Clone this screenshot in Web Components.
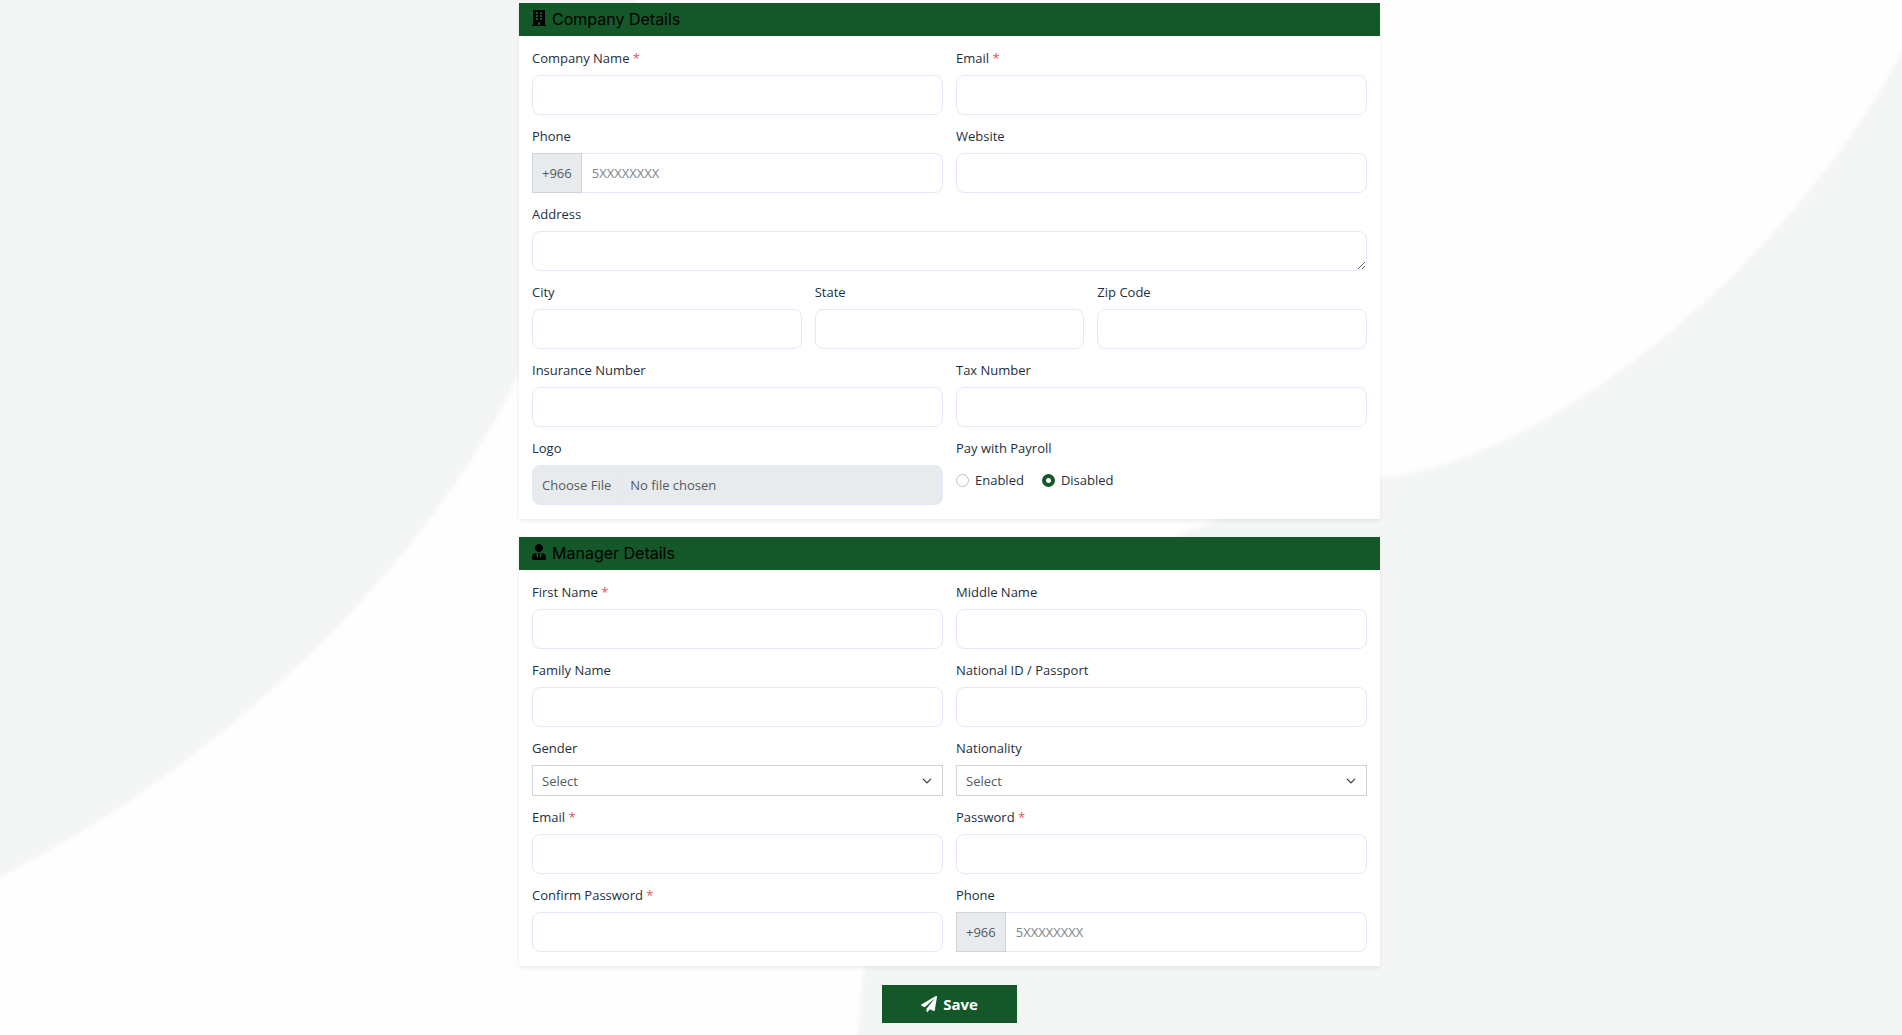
<!DOCTYPE html>
<html lang="en">
<head>
<meta charset="utf-8">
<meta name="viewport" content="width=device-width, initial-scale=1">
<title>Company Registration</title>
<style>
  html, body { margin: 0; min-height: 100%; }
  body { background: #f4f6f6; color: #1e2f40; font: 13px/18px "Open Sans", sans-serif; }
</style>
</head>
<body>
<registration-page>
  <form-card heading="Company Details" icon="building">
    <form-field label="Company Name" required></form-field>
    <form-field label="Email" type="email" required></form-field>
    <form-field label="Phone" type="tel" prefix="+966" placeholder="5XXXXXXXX"></form-field>
    <form-field label="Website" type="url"></form-field>
    <form-field label="Address" type="textarea" span="full"></form-field>
    <form-field label="City" span="third"></form-field>
    <form-field label="State" span="third"></form-field>
    <form-field label="Zip Code" span="third"></form-field>
    <form-field label="Insurance Number"></form-field>
    <form-field label="Tax Number"></form-field>
    <file-field label="Logo"></file-field>
    <radio-field label="Pay with Payroll" options="Enabled,Disabled" value="Disabled"></radio-field>
  </form-card>
  <form-card heading="Manager Details" icon="manager">
    <form-field label="First Name" required></form-field>
    <form-field label="Middle Name"></form-field>
    <form-field label="Family Name"></form-field>
    <form-field label="National ID / Passport"></form-field>
    <form-field label="Gender" type="select"></form-field>
    <form-field label="Nationality" type="select"></form-field>
    <form-field label="Email" type="email" required></form-field>
    <form-field label="Password" type="password" required></form-field>
    <form-field label="Confirm Password" type="password" required></form-field>
    <form-field label="Phone" type="tel" prefix="+966" placeholder="5XXXXXXXX"></form-field>
  </form-card>
  <save-button slot="actions">Save</save-button>
</registration-page>

<script>
const ICONS = {
  building: '<svg viewBox="0 0 14 16" width="14" height="16" aria-hidden="true"><path fill="currentColor" fill-rule="evenodd" d="M1 0h12v15h1v1H0v-1h1zM4 2v2h2V2zM8 2v2h2V2zM4 5v2h2V5zM8 5v2h2V5zM4 8v2h2V8zM8 8v2h2V8zM6 12v3h2v-3z"/></svg>',
  manager: '<svg viewBox="0 0 448 512" width="14" height="16" aria-hidden="true"><path fill="currentColor" d="M224 256c70.7 0 128-57.3 128-128S294.700 0 224 0 96 57.300 96 128s57.300 128 128 128zm95.800 32.600L272 480l-32-136 32-56h-96l32 56-32 136-47.800-191.400C56.900 292 0 350.300 0 422.400V464c0 26.500 21.500 48 48 48h352c26.500 0 48-21.500 48-48v-41.600c0-72.100-56.900-130.400-128.200-133.800z"/></svg>',
  plane: '<svg viewBox="0 0 512 512" width="16" height="16" aria-hidden="true"><path fill="currentColor" d="M476 3.200L12.500 270.600c-18.100 10.400-15.800 35.600 2.200 43.200L121 358.400l287.300-253.200c5.500-4.900 13.300 2.600 8.600 8.300L176 407v80.500c0 23.600 28.500 32.900 42.500 15.800L282 426l124.600 52.200c14.200 6 30.400-2.900 33-18.200l72-432C515 7.800 493.300-6.800 476 3.200z"/></svg>'
};

const BASE = `
  * { box-sizing: border-box; }
  :host { display: block; grid-column: span 3; min-width: 0; }
  label, legend { display: block; padding: 0; line-height: 18px; margin-bottom: 8px; color: #1e2f40; }
  .req { color: #e7515a; }
  input, textarea, select, .prefix { font: inherit; color: #555a60; }
`;

class RegistrationPage extends HTMLElement {
  constructor() {
    super();
    this.attachShadow({ mode: 'open' }).innerHTML = `
      <style>
        :host { display: block; position: relative; min-height: 100vh; overflow: hidden; box-sizing: border-box; padding: 3px 19px 10px 16px; }
        .backdrop { position: absolute; inset: 0; width: 100%; height: 100%; }
        .backdrop path { filter: blur(2px); }
        form { position: relative; display: flex; flex-direction: column; gap: 18px; max-width: 861px; margin: 0 auto; }
        .actions { display: flex; justify-content: center; padding-top: 1px; }
      </style>
      <svg class="backdrop" viewBox="0 0 1902 1035" preserveAspectRatio="none" aria-hidden="true">
        <path fill="#fdfefd" d="M-20 885L0 877C220 767 430 563 518 376C580 240 610 120 640 -20H1940L1902 52C1800 245 1570 455 1380 478C1305 495 1240 505 1172 539C960 640 880 800 864 966L855 1060H-20z"/>
      </svg>
      <form>
        <slot></slot>
        <div class="actions"><slot name="actions"></slot></div>
      </form>`;
  }
}

class FormCard extends HTMLElement {
  connectedCallback() {
    this.attachShadow({ mode: 'open' }).innerHTML = `
      <style>
        :host { display: block; background: #fff; box-shadow: 0 2px 4px rgba(0, 0, 0, .08); }
        h2 { display: flex; gap: 6px; margin: 0; padding: 0 13px; height: 33px; box-sizing: border-box;
             background: #145829; color: #000; font: 400 16px/32px Inter, sans-serif; }
        h2 svg { margin-top: 7px; }
        .grid { display: grid; grid-template-columns: repeat(6, minmax(0, 1fr)); gap: 12px 13px; padding: 13px 13px 14px; }
      </style>
      <h2>${ICONS[this.getAttribute('icon')]}<span>${this.getAttribute('heading')}</span></h2>
      <div class="grid"><slot></slot></div>`;
  }
}

class FormField extends HTMLElement {
  connectedCallback() {
    const type = this.getAttribute('type') || 'text';
    const prefix = this.getAttribute('prefix');
    const req = this.hasAttribute('required');
    let control;
    if (type === 'textarea') control = '<textarea id="control" class="box" rows="1"></textarea>';
    else if (type === 'select') control = `<div class="select"><select id="control"><option>Select</option></select>
      <svg viewBox="0 0 16 16" width="10" height="10" aria-hidden="true"><path d="M2 5l6 6 6-6" fill="none" stroke="#343a40" stroke-width="2" stroke-linecap="round" stroke-linejoin="round"/></svg></div>`;
    else control = `<input id="control" class="box" type="${type}" placeholder="${this.getAttribute('placeholder') || ''}"${req ? ' required' : ''}>`;
    this.attachShadow({ mode: 'open' }).innerHTML = `
      <style>${BASE}
        :host([span="full"]) { grid-column: span 6; }
        :host([span="third"]) { grid-column: span 2; }
        .box { display: block; width: 100%; min-width: 0; height: 40px; margin: 0; padding: 9px; background: #fff;
               border: 1px solid #e4e8f8; border-radius: 8px; }
        textarea { resize: vertical; }
        ::placeholder { color: #7d848a; opacity: 1; }
        .group { display: flex; }
        .prefix { display: flex; align-items: center; padding: 0 9px; background: #e8ebee; border: 1px solid #ced4da; }
        .prefix + .box { flex: 1; border-left: 0; border-radius: 0 8px 8px 0; padding-left: 10px; }
        .select { display: grid; align-items: center; }
        .select > * { grid-area: 1 / 1; }
        select { appearance: none; width: 100%; height: 31px; margin: 0; padding: 0 30px 0 9px; background: #fff;
                 border: 1px solid #ced4da; border-radius: 0; }
        .select svg { justify-self: end; margin-right: 11px; pointer-events: none; }
      </style>
      <label for="control">${this.getAttribute('label')}${req ? ' <span class="req">*</span>' : ''}</label>
      ${prefix ? `<div class="group"><span class="prefix">${prefix}</span>${control}</div>` : control}`;
  }
}

class FileField extends HTMLElement {
  connectedCallback() {
    this.attachShadow({ mode: 'open' }).innerHTML = `
      <style>${BASE}
        input { display: block; width: 100%; height: 40px; padding: 0 9px; line-height: 38px; background: #e8ebee;
                border: 1px solid #e4e8f8; border-radius: 8px; }
        input::file-selector-button { font: inherit; color: inherit; height: 38px; margin: 0 8px 0 0; padding: 0 10px 0 0; border: 0;
                border-right: 1px solid #e4e8f0; background: transparent; }
      </style>
      <label for="file">${this.getAttribute('label')}</label>
      <input id="file" type="file">`;
  }
}

class RadioField extends HTMLElement {
  connectedCallback() {
    const value = this.getAttribute('value');
    const options = this.getAttribute('options').split(',').map(o =>
      `<label><input type="radio" name="choice"${o === value ? ' checked' : ''}>${o}</label>`).join('');
    this.attachShadow({ mode: 'open' }).innerHTML = `
      <style>${BASE}
        fieldset { margin: 0; padding: 0; border: 0; }
        .options { display: flex; gap: 18px; padding-top: 6px; }
        .options label { display: flex; align-items: center; gap: 6px; margin: 0; }
        input { appearance: none; width: 13px; height: 13px; margin: 0; border: 1px solid #bfbfbf; border-radius: 50%; background: #fff; }
        input:checked { border: 4px solid #145829; }
      </style>
      <fieldset><legend>${this.getAttribute('label')}</legend><div class="options">${options}</div></fieldset>`;
  }
}

class SaveButton extends HTMLElement {
  constructor() {
    super();
    this.attachShadow({ mode: 'open' }).innerHTML = `
      <style>
        :host { display: block; }
        button { display: flex; align-items: center; justify-content: center; gap: 6px; height: 38px; padding: 0 39px; border: 0;
                 background: #145829; color: #fff; font: 700 15px/20px "Open Sans", sans-serif; cursor: pointer; }
      </style>
      <button type="submit">${ICONS.plane}<span><slot></slot></span></button>`;
  }
}

customElements.define('registration-page', RegistrationPage);
customElements.define('form-card', FormCard);
customElements.define('form-field', FormField);
customElements.define('file-field', FileField);
customElements.define('radio-field', RadioField);
customElements.define('save-button', SaveButton);
</script>
</body>
</html>
